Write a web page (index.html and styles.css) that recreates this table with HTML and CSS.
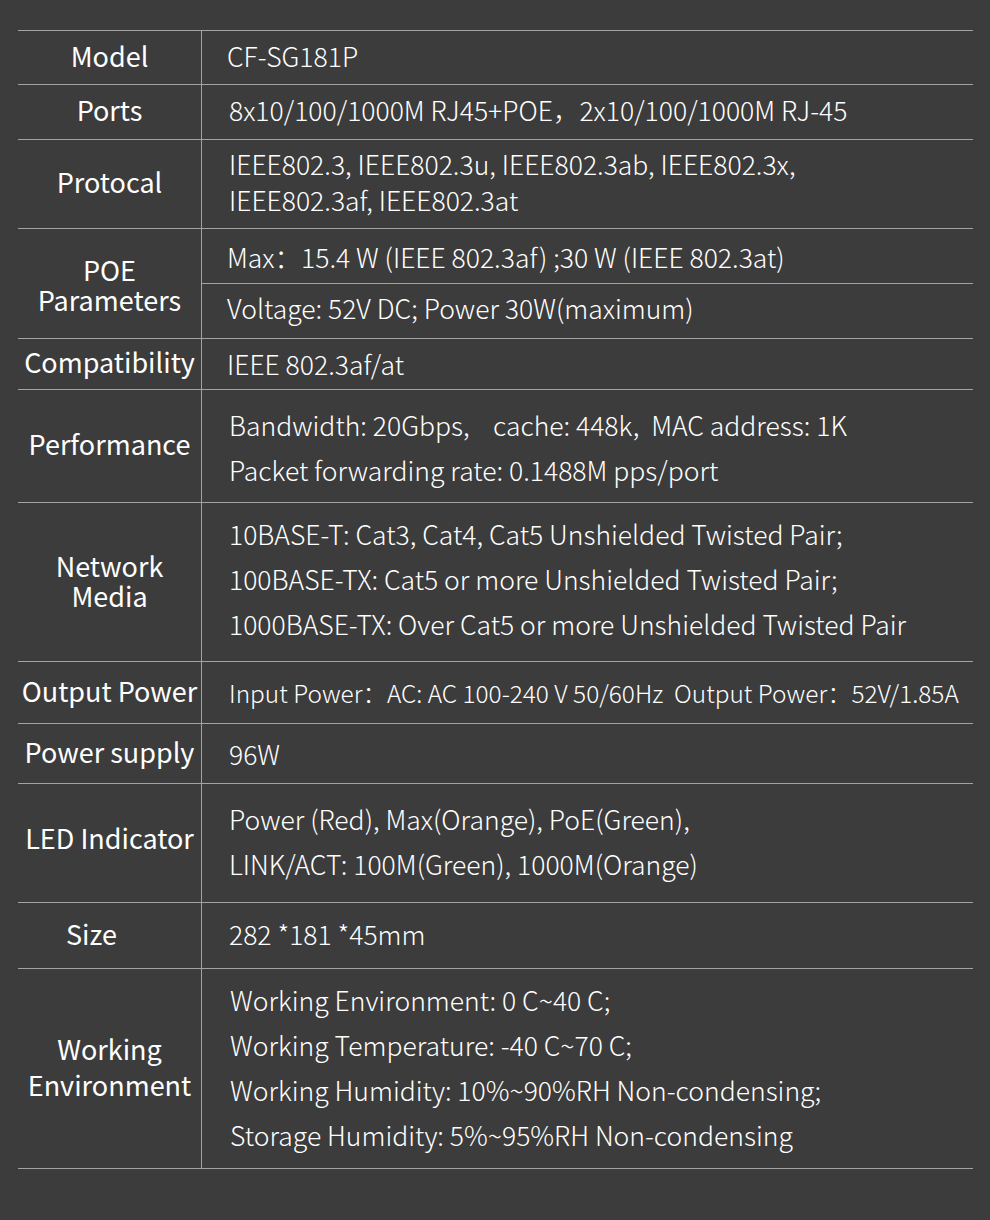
FILE: index.html
```html
<!DOCTYPE html>
<html>
<head>
<meta charset="utf-8">
<link rel="stylesheet" href="styles.css">
</head>
<body>
<div class="table">
  <div class="row r-model"><div class="label">Model</div><div class="value v-tight">CF-SG181P</div></div>
  <div class="row r-ports"><div class="label">Ports</div><div class="value">8x10/100/1000M RJ45+POE，2x10/100/1000M RJ-45</div></div>
  <div class="row r-proto"><div class="label">Protocal</div><div class="value lh36">IEEE802.3, IEEE802.3u, IEEE802.3ab, IEEE802.3x,<br>IEEE802.3af, IEEE802.3at</div></div>
  <div class="row r-poe">
    <div class="label lh30 label-down">POE<br>Parameters</div>
    <div class="subcol">
      <div class="sub">Max：15.4 W (IEEE 802.3af) ;30 W (IEEE 802.3at)</div>
      <div class="sub">Voltage: 52V DC; Power 30W(maximum)</div>
    </div>
  </div>
  <div class="row r-compat"><div class="label">Compatibility</div><div class="value v-tight v-low">IEEE 802.3af/at</div></div>
  <div class="row r-perf"><div class="label">Performance</div><div class="value lh45 v-lower">Bandwidth: 20Gbps,&nbsp;&nbsp;&nbsp;&nbsp;cache: 448k,&nbsp;&nbsp;MAC address: 1K<br>Packet forwarding rate: 0.1488M pps/port</div></div>
  <div class="row r-net"><div class="label lh30">Network<br>Media</div><div class="value lh45 v-high">10BASE-T: Cat3, Cat4, Cat5 Unshielded Twisted Pair;<br>100BASE-TX: Cat5 or more Unshielded Twisted Pair;<br>1000BASE-TX: Over Cat5 or more Unshielded Twisted Pair</div></div>
  <div class="row r-out"><div class="label">Output Power</div><div class="value v-small v-low">Input Power：AC: AC 100-240 V 50/60Hz&nbsp;&nbsp;Output Power：52V/1.85A</div></div>
  <div class="row r-supply"><div class="label">Power supply</div><div class="value v-low">96W</div></div>
  <div class="row r-led"><div class="label label-led">LED Indicator</div><div class="value lh45">Power (Red), Max(Orange), PoE(Green),<br>LINK/ACT: 100M(Green), 1000M(Orange)</div></div>
  <div class="row r-size"><div class="label label-size">Size</div><div class="value">282 *181 *45mm</div></div>
  <div class="row r-work"><div class="label lh36">Working<br>Environment</div><div class="value lh45 v-wide">Working Environment: 0 C~40 C;<br>Working Temperature: -40 C~70 C;<br>Working Humidity: 10%~90%RH Non-condensing;<br>Storage Humidity: 5%~95%RH Non-condensing</div></div>
</div>
</body>
</html>
```

FILE: styles.css
```css
html, body {
  margin: 0;
  padding: 0;
  background: #3c3c3c;
}
body {
  width: 990px;
  height: 1220px;
  padding-top: 30px;
  box-sizing: border-box;
  font-family: "Noto Sans CJK SC", "Noto Sans", sans-serif;
  color: #ffffff;
}
.table {
  margin-left: 18px;
  width: 955px;
  border-top: 1px solid #a3a3a3;
}
.row {
  display: grid;
  grid-template-columns: 184px 1fr;
  border-bottom: 1px solid #a3a3a3;
  box-sizing: border-box;
}
.label {
  display: flex;
  align-items: center;
  justify-content: center;
  text-align: center;
  font-size: 27px;
  font-weight: 400;
  line-height: 1.2;
  padding-bottom: 3px;
  border-right: 1px solid #a3a3a3;
}
.label-down {
  padding-bottom: 0;
  padding-top: 1px;
}
.label-size {
  padding-right: 36px;
}
.label-led {
  padding-bottom: 10px;
}
.value {
  display: flex;
  align-items: center;
  padding-left: 27px;
  padding-bottom: 4px;
  font-size: 26.5px;
  font-weight: 300;
  line-height: 1.2;
  color: #ffffff;
  white-space: nowrap;
}
.v-tight { padding-left: 25px; }
.v-wide { padding-left: 28px; }
.v-small { font-size: 24.4px; }
.v-low { padding-bottom: 0; }
.v-lower { padding-bottom: 0; padding-top: 2px; }
.v-high { padding-bottom: 8px; }
.lh30 { line-height: 30px; }
.lh36 { line-height: 36px; }
.lh45 { line-height: 45px; }
.subcol {
  display: flex;
  flex-direction: column;
}
.sub {
  height: 54px;
  box-sizing: border-box;
  display: flex;
  align-items: center;
  padding-left: 25px;
  font-size: 26.5px;
  font-weight: 300;
  color: #ffffff;
  white-space: nowrap;
}
.sub + .sub {
  height: 56px;
  border-top: 1px solid #a3a3a3;
  padding-bottom: 8px;
}
.r-model { height: 54px; }
.r-ports { height: 55px; }
.r-proto { height: 89px; }
.r-poe { height: 110px; }
.r-compat { height: 51px; }
.r-perf { height: 113px; }
.r-net { height: 159px; }
.r-out { height: 62px; }
.r-supply { height: 60px; }
.r-led { height: 119px; }
.r-size { height: 66px; }
.r-work { height: 200px; }
```
